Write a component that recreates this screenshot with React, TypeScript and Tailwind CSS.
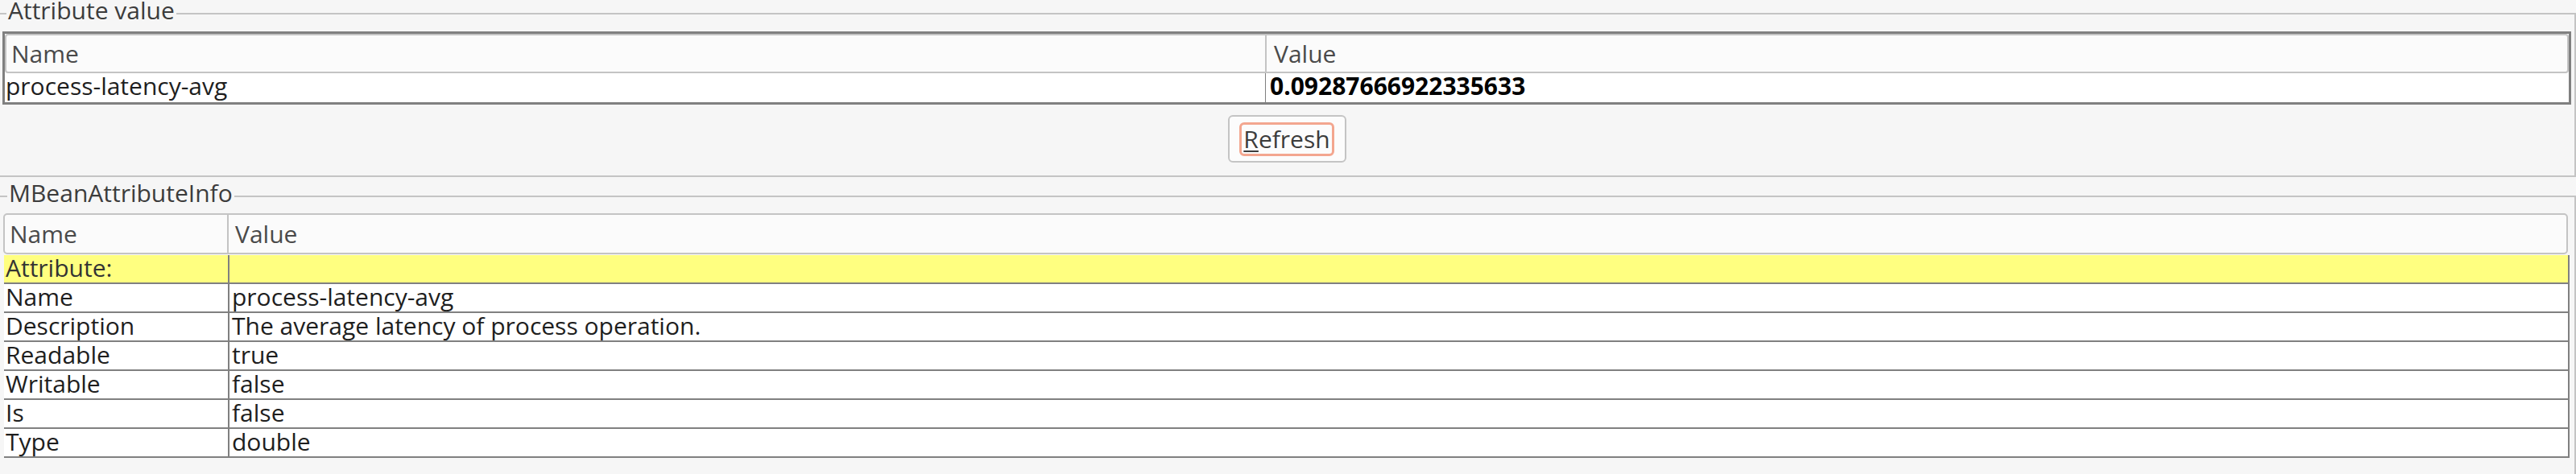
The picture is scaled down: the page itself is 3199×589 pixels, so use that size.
import React from "react";

const rows: [string, string][] = [
  ["Name", "process-latency-avg"],
  ["Description", "The average latency of process operation."],
  ["Readable", "true"],
  ["Writable", "false"],
  ["Is", "false"],
  ["Type", "double"],
];

export default function App() {
  return (
    <div className="w-[3199px] h-[589px] overflow-hidden bg-[#f6f6f6] font-['Open_Sans',sans-serif] text-[30px] text-[#1e1e1e]">
      {/* Section 1 */}
      <div className="relative mt-[16px] border-t-2 border-r-2 border-b-2 border-[#c4c4c4] pt-[21px] pl-[3px] pr-[4px] pb-[16px]">
        <span className="absolute left-[8px] top-[-18px] px-[2px] bg-[#f6f6f6] leading-[26px] text-[#3c3c3c] whitespace-nowrap">
          Attribute value
        </span>
        <div className="border-[3px] border-[#808080] bg-white">
          <div className="flex h-[49px] bg-[#fbfbfb] border-2 border-[#c4c4c4] rounded-[4px] text-[#4a4a4a]">
            <div className="w-[1563px] pl-[6px] flex items-center leading-[30px]">Name</div>
            <div className="flex-1 border-l-2 border-[#c4c4c4] pl-[9px] flex items-center leading-[30px]">Value</div>
          </div>
          <div className="flex h-[36px]">
            <div className="w-[1565px] pl-[1px] leading-[32px] whitespace-nowrap">process-latency-avg</div>
            <div className="flex-1 border-l border-[#808080] pl-[5px] leading-[32px] font-bold text-black">
              0.09287666922335633
            </div>
          </div>
        </div>
        <div className="flex justify-center mt-[13px]">
          <button className="w-[147px] h-[59px] border-2 border-[#c4c4c4] rounded-[6px] bg-[#fcfcfc] flex items-center justify-center">
            <span className="border-[3px] border-[#f3a68f] rounded-[6px] px-[2px] leading-[36px] text-[#3c3c3c]">
              <span className="underline decoration-2 underline-offset-[3px]">R</span>efresh
            </span>
          </button>
        </div>
      </div>

      {/* Section 2 */}
      <div className="relative mt-[23px] border-t-2 border-r-2 border-[#c4c4c4] pt-[20px] pl-[4px] pr-[6px] h-[400px]">
        <span className="absolute left-[9px] top-[-18px] px-[2px] bg-[#f6f6f6] leading-[26px] text-[#3c3c3c] whitespace-nowrap">
          MBeanAttributeInfo
        </span>
        <div className="flex h-[51px] mr-[2px] bg-[#fbfbfb] border-2 border-[#c4c4c4] rounded-[5px] text-[#4a4a4a]">
          <div className="w-[276px] pl-[6px] flex items-center leading-[30px]">Name</div>
          <div className="flex-1 border-l-2 border-[#c4c4c4] pl-[8px] flex items-center leading-[30px]">Value</div>
        </div>
        <div className="mt-[1px] ml-[1px] bg-white border-r-2 border-[#808080]">
          <div className="flex h-[36px] border-b-2 border-[#808080] bg-[#ffff80]">
            <div className="w-[278px] pl-[2px] leading-[32px] text-[#333]">Attribute:</div>
            <div className="flex-1 border-l-2 border-[#808080] pl-[3px] leading-[32px]"></div>
          </div>
          {rows.map(([k, v]) => (
            <div key={k} className="flex h-[36px] border-b-2 border-[#808080]">
              <div className="w-[278px] pl-[2px] leading-[32px] whitespace-nowrap">{k}</div>
              <div className="flex-1 border-l-2 border-[#808080] pl-[3px] leading-[32px] whitespace-nowrap">{v}</div>
            </div>
          ))}
        </div>
      </div>
    </div>
  );
}
